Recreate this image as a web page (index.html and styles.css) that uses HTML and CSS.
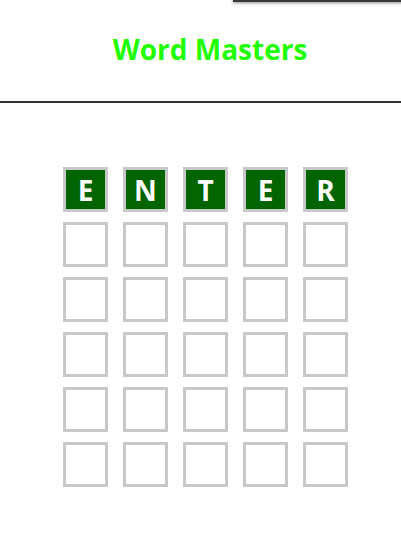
FILE: index.html
```html
<!DOCTYPE html>
<html>
<head>
<meta charset="utf-8">
<link rel="stylesheet" href="styles.css">
</head>
<body>
<div class="topbox"></div>
<header class="header">
  <h1 class="title">Word Masters</h1>
</header>
<main class="board">
  <div class="tile filled">E</div>
  <div class="tile filled">N</div>
  <div class="tile filled">T</div>
  <div class="tile filled">E</div>
  <div class="tile filled">R</div>
  <div class="tile"></div><div class="tile"></div><div class="tile"></div><div class="tile"></div><div class="tile"></div>
  <div class="tile"></div><div class="tile"></div><div class="tile"></div><div class="tile"></div><div class="tile"></div>
  <div class="tile"></div><div class="tile"></div><div class="tile"></div><div class="tile"></div><div class="tile"></div>
  <div class="tile"></div><div class="tile"></div><div class="tile"></div><div class="tile"></div><div class="tile"></div>
  <div class="tile"></div><div class="tile"></div><div class="tile"></div><div class="tile"></div><div class="tile"></div>
</main>
</body>
</html>
```
FILE: styles.css
```css
html, body {
  margin: 0;
  padding: 0;
  background: #fff;
  font-family: "Open Sans", "Noto Sans", sans-serif;
}
body {
  position: relative;
  overflow: hidden;
  height: 537px;
}
.topbox {
  position: absolute;
  top: -10px;
  left: 233px;
  right: -10px;
  height: 12px;
  background: #3a3a3a;
  box-shadow: 0 1px 3px rgba(0,0,0,0.45);
}
.header {
  height: 101px;
  border-bottom: 2px solid #333;
  display: flex;
  align-items: center;
  justify-content: center;
  padding-left: 19px;
  box-sizing: content-box;
}
.title {
  margin: 0;
  font-size: 28px;
  font-weight: 700;
  color: #22ff00;
  letter-spacing: 0;
  position: relative;
  top: -2px;
}
.board {
  display: grid;
  grid-template-columns: repeat(5, 45px);
  grid-auto-rows: 45px;
  column-gap: 15px;
  row-gap: 10px;
  margin: 64px 0 0 63px;
}
.tile {
  box-sizing: border-box;
  border: 3px solid #c8c8c8;
  display: flex;
  align-items: center;
  justify-content: center;
  font-size: 28px;
  font-weight: 700;
  color: #fff;
  line-height: 1;
}
.tile.filled {
  background: #006400;
}
```
